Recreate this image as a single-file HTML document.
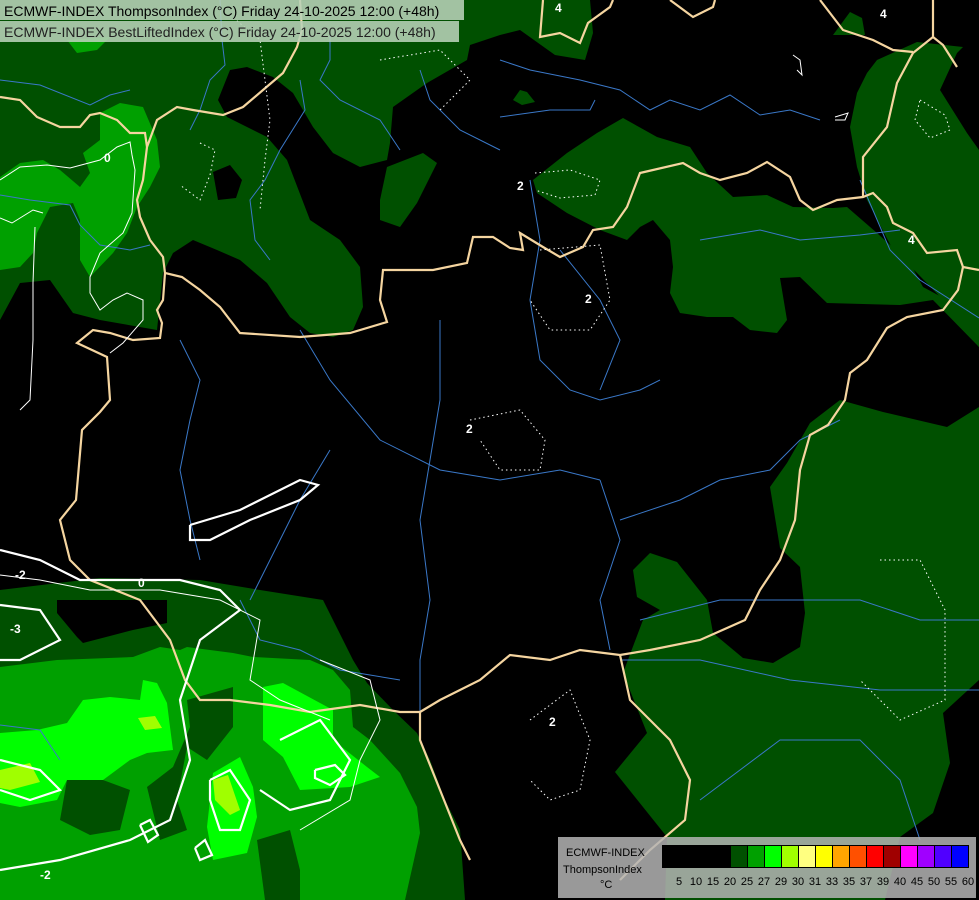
<!DOCTYPE html>
<html><head><meta charset="utf-8"><style>
html,body{margin:0;padding:0;background:#000;width:979px;height:900px;overflow:hidden}
svg{display:block}
.t{font-family:"Liberation Sans",sans-serif}
</style></head><body>
<svg width="979" height="900" viewBox="0 0 979 900" xmlns="http://www.w3.org/2000/svg">
<rect width="979" height="900" fill="#000"/>
<g fill="#005000">
<polygon points="0,0 590,0 593,33 585,60 555,55 520,30 500,35 470,45 467,60 427,83 393,107 390,143 387,160 360,167 333,153 313,127 293,93 273,77 247,67 230,70 218,100 227,117 267,137 287,160 310,220 340,240 360,267 363,307 353,330 333,337 310,333 290,317 267,283 240,260 217,250 193,240 173,253 163,273 157,330 100,320 73,313 50,280 20,283 0,320"/>
<polygon points="380,200 387,167 423,153 437,163 417,203 400,227 380,220"/>
<polygon points="513,100 520,90 527,92 535,102 522,105"/>
<polygon points="833,35 850,12 862,18 865,35"/>
<polygon points="877,60 917,42 963,47 957,53 940,90 967,133 979,150 979,347 967,333 950,307 917,273 893,250 867,200 857,167 850,127 857,93 867,73"/>
<polygon points="533,180 567,153 597,133 623,118 657,137 690,147 707,173 733,197 767,195 793,207 833,208 847,207 877,233 910,263 923,287 979,317 979,347 933,300 900,305 827,303 800,277 780,278 787,320 777,333 750,330 733,317 707,317 680,313 670,293 673,267 670,240 653,220 640,227 627,240 600,230 567,213 537,193"/>
<polygon points="840,400 883,412 947,427 979,407 979,680 943,713 950,763 933,813 900,837 885,900 665,900 667,837 615,772 647,733 623,673 643,620 660,610 637,597 633,570 650,553 677,562 707,600 713,633 743,658 773,663 800,647 805,613 800,567 780,548 770,487 787,463 810,423"/>
<polygon points="0,590 100,578 200,580 260,590 323,600 353,660 367,683 393,710 417,733 430,760 445,800 460,830 465,900 0,900"/>
</g>
<polygon fill="#000" points="57,600 167,600 167,623 133,630 83,643 77,637 57,613"/>
<polygon fill="#000" points="213,172 230,165 242,180 236,198 218,200"/>
<g fill="#00a000">
<polygon points="0,177 20,163 43,160 60,170 80,187 90,173 83,153 100,140 100,113 120,103 143,107 157,140 160,167 150,187 137,207 127,233 113,253 90,277 80,260 80,220 73,203 50,207 37,233 33,253 20,267 0,270"/>
<polygon points="67,40 110,37 97,50 77,53"/>
<polygon points="0,667 57,660 133,657 160,647 180,650 187,647 233,653 253,657 310,660 333,670 350,690 353,727 370,740 400,773 417,807 420,833 405,900 0,900"/>
</g>
<g fill="#005000">
<polygon points="187,700 233,687 233,727 207,760 187,747 177,800 187,830 160,840 147,787 173,767 190,727"/>
<polygon points="67,780 103,780 130,790 120,830 90,835 60,820"/>
<polygon points="257,840 290,830 300,870 300,900 265,900"/>
</g>
<g fill="#00ff00">
<polygon points="0,733 37,730 67,723 83,700 110,697 140,700 143,680 157,683 167,703 170,727 173,750 147,753 130,760 103,780 67,780 57,800 20,807 0,803"/>
<polygon points="263,687 283,683 333,710 333,740 367,767 380,777 350,787 300,790 283,757 263,740 263,710"/>
<polygon points="213,773 240,757 253,787 257,817 247,853 213,860 207,827"/>
</g>
<g fill="#a0ff00">
<polygon points="138,718 155,716 162,728 145,730"/>
<polygon points="213,780 228,775 240,810 230,815 215,800"/>
<polygon points="0,770 30,763 40,782 10,790 0,788"/>
</g>
<g fill="none" stroke="#3a78c8" stroke-width="1">
<polyline points="0,80 40,85 90,105 110,95 130,90"/>
<polyline points="0,195 30,200 70,205 80,225 100,245 130,250 150,245"/>
<polyline points="220,0 222,40 225,65 210,80 200,110 190,130"/>
<polyline points="300,80 305,110 280,150 265,180 250,200 255,240 270,260"/>
<polyline points="330,30 330,60 320,80 340,100 380,120 400,150"/>
<polyline points="420,70 430,100 460,130 500,150"/>
<polyline points="500,60 530,70 580,80 620,90 650,110 670,100 700,110 730,95 760,115 790,110 820,120"/>
<polyline points="500,117 550,110 590,110 595,100"/>
<polyline points="180,340 200,380 190,420 180,470 190,520 200,560"/>
<polyline points="300,330 330,380 380,440 440,470 500,480 560,470 600,480"/>
<polyline points="440,320 440,400 430,460 420,520 430,600 420,660 420,720"/>
<polyline points="530,180 540,240 530,300 540,360 570,390 600,400 640,390 660,380"/>
<polyline points="560,250 600,300 620,340 600,390"/>
<polyline points="600,480 620,540 600,600 610,650"/>
<polyline points="620,520 680,500 720,480 770,470 800,440 840,420"/>
<polyline points="640,620 720,600 800,600 860,600 920,620 979,620"/>
<polyline points="620,660 700,660 790,680 880,690 979,690"/>
<polyline points="700,800 780,740 860,740 900,780 920,840"/>
<polyline points="700,240 760,230 800,240 860,235 900,230"/>
<polyline points="860,180 890,250 920,280 979,318"/>
<polyline points="330,450 300,500 280,540 250,600"/>
<polyline points="0,725 40,730 60,760"/>
<polyline points="240,600 260,640 300,650 340,670 400,680"/>
</g>
<g fill="none" stroke="#f5d5a0" stroke-width="2.2">
<polyline points="0,97 20,100 37,117 60,127 80,127 90,115 100,113 117,120 130,133 145,133 147,147 157,120 177,107 193,110 223,115 243,107 263,90 283,73 297,47 302,30 300,0"/>
<polyline points="147,147 143,180 137,200 140,217 150,240 163,257 165,273 182,277 200,290 220,307 240,333 300,337 350,333 387,322 380,300 383,270 433,270 467,263 473,237 493,237 510,248 523,250 520,233 543,247 560,257 583,247 593,230 613,227 627,207 640,173 683,163 700,173 720,180 747,173 767,162 790,177 800,200 813,210 837,200 863,197 873,193 887,207 893,223 913,233 927,253 957,250 963,267 979,270"/>
<polyline points="863,197 863,157 887,127 897,83 913,53 933,37 933,0"/>
<polyline points="913,52 893,50 873,40 843,30 820,0"/>
<polyline points="933,37 943,45 957,67"/>
<polyline points="543,0 540,37 560,33 580,43 588,23 610,7 613,0"/>
<polyline points="670,0 693,17 713,7 715,0"/>
<polyline points="963,267 958,290 943,310 907,317 887,328 867,360 850,373 845,400 828,425 810,435 800,470 795,520 780,560 760,590 745,620 700,640 650,650 620,655 580,650 550,660 510,655 480,680 440,700 420,712"/>
<polyline points="165,273 163,300 157,310 162,323 160,338 133,340 110,333 93,330 77,343 107,357 110,400 100,412 82,430 76,500 60,520 70,560 90,580 140,600 170,640 185,680 200,700 230,700 270,705 310,712 360,705 400,712 420,712 420,740 440,790 460,840 470,860"/>
<polyline points="620,655 630,700 670,740 690,780 685,820 650,850 620,880"/>
</g>
<g fill="none" stroke="#fff" stroke-width="1" stroke-dasharray="1.5,3">
<polyline points="200,143 215,150 210,175 200,200 180,185"/>
<polyline points="470,420 520,410 545,440 540,470 500,470 480,440"/>
<polyline points="540,250 600,245 610,300 590,330 550,330 530,300"/>
<polyline points="380,60 440,50 470,80 440,110"/>
<polyline points="530,720 570,690 590,740 580,790 550,800 530,780"/>
<polyline points="880,560 920,560 945,610 945,700 900,720 860,680"/>
<polyline points="920,100 945,115 950,130 930,138 915,120 920,100"/>
<polyline points="535,173 570,170 600,180 595,195 560,198 535,190"/>
<polyline points="230,15 260,40 265,80 270,120 265,160 260,210"/>
</g>
<g fill="none" stroke="#fff" stroke-width="1">
<polyline points="0,180 20,167 47,165 70,168 100,160 117,147 130,142 132,155 135,170 132,213 123,233 100,253 90,277 90,293 100,310 113,300 127,293 143,300 143,320 123,343 110,353"/>
<polyline points="0,218 12,223 33,210 43,213"/>
<polyline points="35,227 33,283 33,340 30,400 20,410"/>
<polyline points="0,575 40,580 90,590 160,590 220,600 260,620 250,680 280,700 330,720"/>
<polyline points="320,660 370,680 380,720 360,760 350,800 300,830"/>
<polyline points="793,55 800,60 802,75 797,70"/>
<polyline points="835,117 848,113 845,120 835,120"/>
</g>
<g fill="none" stroke="#fff" stroke-width="2.2">
<polyline points="0,550 40,560 80,580 120,580 180,580 220,590 240,610 200,640 180,700 190,760 170,820 130,840 60,860 0,870"/>
<polyline points="0,605 40,610 60,640 20,660 0,660"/>
<polyline points="0,760 40,770 60,790 30,800 0,790"/>
<polyline points="190,525 240,510 300,480 318,485 300,500 250,520 210,540 190,540 190,525"/>
<polyline points="210,780 230,770 250,800 240,830 220,830 210,800 210,780"/>
<polyline points="315,770 335,765 345,775 330,785 315,778 315,770"/>
<polyline points="140,825 150,820 158,835 148,842 140,825"/>
<polyline points="195,848 205,840 212,855 200,860 195,848"/>
<polyline points="280,740 320,720 350,760 330,800 290,810 260,790"/>
</g>
<g class="t" fill="#fff" font-size="12" font-weight="bold">
<text x="104" y="162">0</text><text x="517" y="190">2</text><text x="585" y="303">2</text>
<text x="466" y="433">2</text><text x="549" y="726">2</text><text x="138" y="587">0</text>
<text x="15" y="579">-2</text><text x="10" y="633">-3</text><text x="40" y="879">-2</text>
<text x="908" y="244">4</text><text x="555" y="12">4</text><text x="880" y="18">4</text>
</g>
<rect x="0" y="0" width="464" height="20" fill="#b8d2b8" opacity="0.88"/>
<rect x="0" y="21" width="459" height="21" fill="#b8d2b8" opacity="0.88"/>
<text class="t" x="4" y="16" font-size="14" fill="#000">ECMWF-INDEX ThompsonIndex (°C) Friday 24-10-2025 12:00 (+48h)</text>
<text class="t" x="4" y="37" font-size="14" fill="#222">ECMWF-INDEX BestLiftedIndex (°C) Friday 24-10-2025 12:00 (+48h)</text>
<rect x="558" y="837" width="418" height="61" fill="#b4b4b4" opacity="0.85"/>
<g class="t" font-size="11" fill="#000">
<text x="566" y="856">ECMWF-INDEX</text>
<text x="563" y="873">ThompsonIndex</text>
<text x="600" y="888">°C</text>
</g>
<g stroke="#000" stroke-width="1">
<rect x="662.5" y="845.5" width="17" height="22" fill="#000"/>
<rect x="679.5" y="845.5" width="17" height="22" fill="#000"/>
<rect x="696.5" y="845.5" width="17" height="22" fill="#000"/>
<rect x="713.5" y="845.5" width="17" height="22" fill="#000"/>
<rect x="730.5" y="845.5" width="17" height="22" fill="#005000"/>
<rect x="747.5" y="845.5" width="17" height="22" fill="#00a000"/>
<rect x="764.5" y="845.5" width="17" height="22" fill="#00ff00"/>
<rect x="781.5" y="845.5" width="17" height="22" fill="#a0ff00"/>
<rect x="798.5" y="845.5" width="17" height="22" fill="#ffff80"/>
<rect x="815.5" y="845.5" width="17" height="22" fill="#ffff00"/>
<rect x="832.5" y="845.5" width="17" height="22" fill="#ffa500"/>
<rect x="849.5" y="845.5" width="17" height="22" fill="#ff5000"/>
<rect x="866.5" y="845.5" width="17" height="22" fill="#ff0000"/>
<rect x="883.5" y="845.5" width="17" height="22" fill="#a00000"/>
<rect x="900.5" y="845.5" width="17" height="22" fill="#ff00ff"/>
<rect x="917.5" y="845.5" width="17" height="22" fill="#a000ff"/>
<rect x="934.5" y="845.5" width="17" height="22" fill="#5000ff"/>
<rect x="951.5" y="845.5" width="17" height="22" fill="#0000ff"/>
</g>
<g class="t" font-size="11" fill="#000" text-anchor="middle">
<text x="679" y="885">5</text><text x="696" y="885">10</text><text x="713" y="885">15</text><text x="730" y="885">20</text><text x="747" y="885">25</text><text x="764" y="885">27</text><text x="781" y="885">29</text><text x="798" y="885">30</text><text x="815" y="885">31</text><text x="832" y="885">33</text><text x="849" y="885">35</text><text x="866" y="885">37</text><text x="883" y="885">39</text><text x="900" y="885">40</text><text x="917" y="885">45</text><text x="934" y="885">50</text><text x="951" y="885">55</text><text x="968" y="885">60</text>
</g>
</svg>
</body></html>
